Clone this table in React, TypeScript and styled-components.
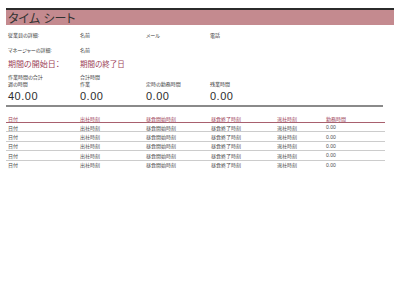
import React from "react";
import styled, { createGlobalStyle } from "styled-components";

const GlobalStyle = createGlobalStyle`
  body {
    margin: 0;
    background: #ffffff;
    font-family: "Liberation Sans", "Noto Sans CJK JP", sans-serif;
    color: #333333;
  }
`;

const Sheet = styled.div`
  width: 388px;
  padding: 8px 6px 0;
`;

const TitleBar = styled.div`
  height: 15px;
  border-top: 2px solid #2b2b2b;
  background-color: #c48a8f;
  padding-left: 2px;
  display: flex;
  align-items: center;
  font-size: 12px;
  font-feature-settings: "palt";
  color: #333333;
`;

const InfoGrid = styled.div`
  display: grid;
  grid-template-columns: 72px 66px 64px 1fr;
  padding: 0 2px;
`;

const Cell = styled.div<{ h: number; size?: number; accent?: boolean }>`
  height: ${(p) => p.h}px;
  display: flex;
  align-items: center;
  white-space: nowrap;
  font-size: ${(p) => p.size || 5}px;
  color: ${(p) => (p.accent ? "#9c3f58" : "#3a3a3a")};
  font-feature-settings: "palt";
`;

const Total = styled.div`
  height: 18px;
  display: flex;
  align-items: center;
  font-size: 11px;
  letter-spacing: 0.5px;
  color: #2e2e2e;
`;

const TotalsRule = styled.div`
  width: 377px;
  border-top: 2px solid #8a8a8a;
`;

const Table = styled.div`
  margin-top: 8px;
  width: 379px;
`;

const TableRow = styled.div<{ head?: boolean }>`
  display: grid;
  grid-template-columns: 72px 66px 65px 66px 49px 1fr;
  height: ${(p) => (p.head ? 7 : 8.4)}px;
  padding-left: 2px;
  align-items: center;
  font-size: 5px;
  font-feature-settings: "palt";
  color: ${(p) => (p.head ? "#9c3f58" : "#4a4a4a")};
  border-bottom: 1px solid ${(p) => (p.head ? "#a8606e" : "#cccccc")};

  &:last-child {
    border-bottom: none;
  }
`;

const headers = ["日付", "出社時刻", "昼食開始時刻", "昼食終了時刻", "退社時刻", "勤務時間"];
const row = ["日付", "出社時刻", "昼食開始時刻", "昼食終了時刻", "退社時刻", "0.00"];

export default function App() {
  return (
    <>
      <GlobalStyle />
      <Sheet>
        <TitleBar>タイム シート</TitleBar>
        <InfoGrid>
          <Cell h={19}>従業員の詳細:</Cell>
          <Cell h={19}>名前</Cell>
          <Cell h={19}>メール</Cell>
          <Cell h={19}>電話</Cell>

          <Cell h={10}>マネージャーの詳細:</Cell>
          <Cell h={10}>名前</Cell>
          <Cell h={10} />
          <Cell h={10} />

          <Cell h={19} size={8} accent>期間の開始日：</Cell>
          <Cell h={19} size={7.5} accent>期間の終了日</Cell>
          <Cell h={19} />
          <Cell h={19} />

          <Cell h={7}>作業時間の合計</Cell>
          <Cell h={7}>合計時間</Cell>
          <Cell h={7} />
          <Cell h={7} />

          <Cell h={7}>週の時間</Cell>
          <Cell h={7}>作業</Cell>
          <Cell h={7}>定時の勤務時間</Cell>
          <Cell h={7}>残業時間</Cell>

          <Total>40.00</Total>
          <Total>0.00</Total>
          <Total>0.00</Total>
          <Total>0.00</Total>
        </InfoGrid>
        <TotalsRule />
        <Table>
          <TableRow head>
            {headers.map((h) => (
              <span key={h}>{h}</span>
            ))}
          </TableRow>
          {[0, 1, 2, 3, 4].map((i) => (
            <TableRow key={i}>
              {row.map((c, j) => (
                <span key={j}>{c}</span>
              ))}
            </TableRow>
          ))}
        </Table>
      </Sheet>
    </>
  );
}
